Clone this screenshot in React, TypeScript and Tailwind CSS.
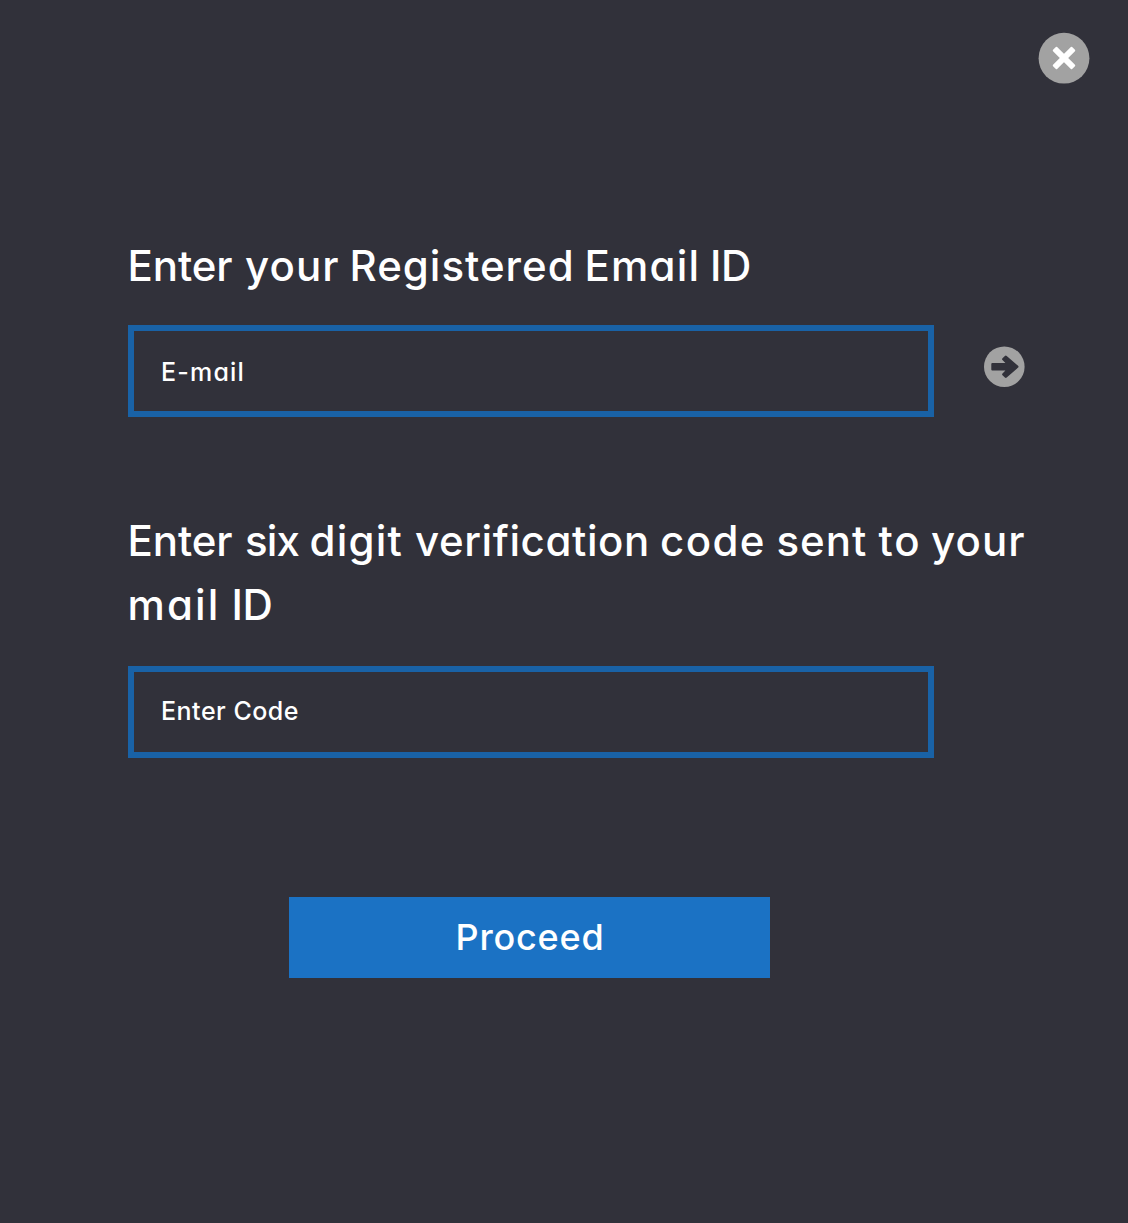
type Word = { text: string; className: string };

const emailHeading: Word[] = [
  { text: "Enter ", className: "w-[117.5px] tracking-[-0.1px]" },
  { text: "your ", className: "w-[104.5px] tracking-[1.1px]" },
  { text: "Registered ", className: "w-[235px] tracking-[1px]" },
  { text: "Email ", className: "w-[125.5px] tracking-[1.2px]" },
  { text: "ID", className: "tracking-[-0.4px]" },
];

const codeHeadingTop: Word[] = [
  { text: "Enter ", className: "w-[117.5px] tracking-[-0.1px]" },
  { text: "six ", className: "w-[64.5px] tracking-[-0.8px]" },
  { text: "digit ", className: "w-[105.5px] tracking-[1.2px]" },
  { text: "verification ", className: "w-[245px] tracking-[0.6px]" },
  { text: "code ", className: "w-[116.5px] tracking-[1.4px]" },
  { text: "sent ", className: "w-[102px] tracking-[1px]" },
  { text: "to ", className: "w-[52.5px] tracking-[1.8px]" },
  { text: "your ", className: "tracking-[1.1px]" },
];

const codeHeadingBottom: Word[] = [
  { text: "mail ", className: "w-[104px] tracking-[2.1px]" },
  { text: "ID", className: "tracking-[-0.4px]" },
];

function Line({ words }: { words: Word[] }) {
  return (
    <span className="flex whitespace-pre">
      {words.map((w) => (
        <span key={w.text} className={`shrink-0 ${w.className}`}>
          {w.text}
        </span>
      ))}
    </span>
  );
}

function CloseIcon() {
  return (
    <svg viewBox="0 0 52 52" className="size-[52px]" aria-hidden="true">
      <circle cx="26" cy="26.2" r="25.4" fill="#a2a2a2" />
      <g fill="#fff" transform="rotate(45 26 26)">
        <rect x="12.5" y="23.1" width="27" height="5.8" rx="0.9" />
        <rect x="23.1" y="12.5" width="5.8" height="27" rx="0.9" />
      </g>
    </svg>
  );
}

function ArrowIcon() {
  return (
    <svg viewBox="0 0 42 42" className="size-[42px]" aria-hidden="true">
      <circle cx="21.3" cy="20.7" r="20.3" fill="#a2a2a2" />
      <path
        d="M9.3 17H22.4L19.5 14.1Q18.6 13.2 19.5 12.3L21.9 9.9Q22.8 9 23.7 9.9L35.1 19.8Q36 20.7 35.1 21.6L23.7 31.6Q22.8 32.4 21.9 31.6L19.5 29.2Q18.6 28.3 19.5 27.4L22.4 24.5H9.3Q8.3 24.5 8.3 23.5V18Q8.3 17 9.3 17Z"
        fill="#31313a"
      />
    </svg>
  );
}

export default function App() {
  return (
    <main className="flex h-[1223px] w-[1128px] flex-col bg-[#31313a] font-['Inter',sans-serif] font-medium text-white [font-feature-settings:'cv11']">
      <header className="flex justify-end pt-8 pr-[38px]">
        <button type="button" aria-label="Close">
          <CloseIcon />
        </button>
      </header>

      <form className="flex flex-col pt-[150px] pl-[127.5px]" onSubmit={(e) => e.preventDefault()}>
        <h2 className="text-[42px] leading-[64px]">
          <Line words={emailHeading} />
        </h2>
        <div className="mt-[27px] ml-[0.5px] flex">
          <div className="flex h-[92px] w-[806px] items-center border-6 border-[#1962a6] pt-[4px] pl-[27px] text-[25px] tracking-[1.2px]">
            E-mail
          </div>
          <button type="button" aria-label="Send code" className="mt-[21px] ml-[49px] self-start">
            <ArrowIcon />
          </button>
        </div>

        <h2 className="mt-[92px] text-[42px] leading-[64px]">
          <Line words={codeHeadingTop} />
          <Line words={codeHeadingBottom} />
        </h2>
        <div className="mt-[29px] ml-[0.5px] flex h-[92px] w-[806px] items-center border-6 border-[#1962a6] pb-px pl-[27px] text-[25px] tracking-[0.5px]">
          Enter Code
        </div>

        <button
          type="submit"
          className="mt-[139px] ml-[161.5px] h-[81px] w-[481px] bg-[#1b72c4] pb-[2px] pl-px text-[36px] tracking-[0.8px]"
        >
          Proceed
        </button>
      </form>
    </main>
  );
}
